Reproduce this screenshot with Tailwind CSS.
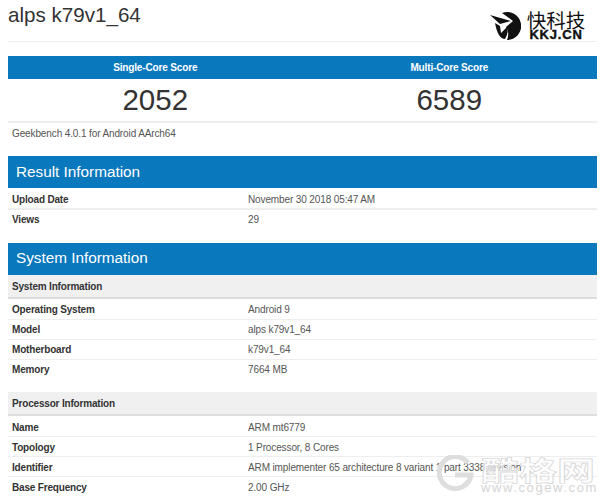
<!DOCTYPE html>
<html lang="en">
<head>
    <meta charset="UTF-8">
    <title>alps k79v1_64 - Geekbench</title>
    <script src="https://cdn.jsdelivr.net/npm/@tailwindcss/browser@4"></script>
</head>
<body class="bg-white font-['Liberation_Sans',Arial,sans-serif] text-[#333]">
    <div class="relative w-[600px] h-[501px] overflow-hidden pl-[8px] pr-[3px]">

        <!-- Header -->
        <div class="flex justify-between h-[42px] border-b border-[#eee]">
            <h1 class="text-[20.6px] leading-[30px] text-[#333]">alps k79v1_64</h1>
            <div class="flex items-start gap-[5px] pr-[11px] pt-[10px]">
                <svg class="w-[32px] h-[29px] mt-[2px]" viewBox="0 0 32 29">
                    <path d="M13 1 A14 14 0 1 1 18 28 Q21 20 17 15 L24 9 Z" fill="#111"/>
                    <path d="M1 3 L22 9 L11 12 Z" fill="#111"/>
                    <path d="M6 11 L11 14 L12 21 L18 15 Q20 20 16 27 Q9 27 6 11 Z" fill="#111"/>
                </svg>
                <div class="flex flex-col items-center w-[60px]">
                    <span class="text-[19.5px] leading-[19px] text-[#111] font-['Noto_Sans_CJK_SC',sans-serif]">快科技</span>
                    <span class="mt-[1px] text-[13px] leading-[10px] font-black tracking-[0.8px] text-[#111] [-webkit-text-stroke:0.4px_#111]">KKJ.CN</span>
                </div>
            </div>
        </div>

        <!-- Scores -->
        <div class="mt-[14px] grid grid-cols-2 h-[23px] bg-[#0a78bd] text-white text-[10px] tracking-[-0.15px] font-bold text-center leading-[23px]">
            <div>Single-Core Score</div>
            <div class="pr-[1px]">Multi-Core Score</div>
        </div>
        <div class="grid grid-cols-2 h-[44px] border-b-2 border-[#eee] text-[29.5px] text-center leading-[42px] text-[#333]">
            <div>2052</div>
            <div class="pr-[1px]">6589</div>
        </div>
        <p class="pl-[4px] text-[10px] tracking-[-0.12px] leading-[21px] text-[#555]">Geekbench 4.0.1 for Android AArch64</p>

        <!-- Result Information -->
        <h2 class="mt-[12px] h-[32px] pl-[8px] bg-[#0a78bd] text-white text-[15.3px] leading-[31px]">Result Information</h2>
        <div class="flex h-[22px] border-b-2 border-[#eee] text-[10px] leading-[23px]">
            <div class="w-[240px] pl-[4px] font-bold tracking-[-0.18px]">Upload Date</div>
            <div class="text-[#555] tracking-[-0.12px]">November 30 2018 05:47 AM</div>
        </div>
        <div class="flex h-[20px] text-[10px] leading-[20px]">
            <div class="w-[240px] pl-[4px] font-bold tracking-[-0.18px]">Views</div>
            <div class="text-[#555] tracking-[-0.12px]">29</div>
        </div>

        <!-- System Information -->
        <h2 class="mt-[13px] h-[32px] pl-[8px] bg-[#0a78bd] text-white text-[15.3px] leading-[30px]">System Information</h2>
        <div class="h-[24px] pl-[4px] bg-[#f0f0f0] border-b-2 border-[#ddd] text-[10px] tracking-[-0.18px] font-bold leading-[23px]">System Information</div>
        <div class="flex h-[21px] border-b border-[#eee] text-[10px] leading-[21px]">
            <div class="w-[240px] pl-[4px] font-bold tracking-[-0.18px]">Operating System</div>
            <div class="text-[#555] tracking-[-0.12px]">Android 9</div>
        </div>
        <div class="flex h-[20px] border-b border-[#eee] text-[10px] leading-[20px]">
            <div class="w-[240px] pl-[4px] font-bold tracking-[-0.18px]">Model</div>
            <div class="text-[#555] tracking-[-0.12px]">alps k79v1_64</div>
        </div>
        <div class="flex h-[20px] border-b border-[#eee] text-[10px] leading-[20px]">
            <div class="w-[240px] pl-[4px] font-bold tracking-[-0.18px]">Motherboard</div>
            <div class="text-[#555] tracking-[-0.12px]">k79v1_64</div>
        </div>
        <div class="flex h-[20px] text-[10px] leading-[20px]">
            <div class="w-[240px] pl-[4px] font-bold tracking-[-0.18px]">Memory</div>
            <div class="text-[#555] tracking-[-0.12px]">7664 MB</div>
        </div>

        <!-- Processor Information -->
        <div class="mt-[12px] h-[24px] pl-[4px] bg-[#f0f0f0] border-b-2 border-[#ddd] text-[10px] tracking-[-0.18px] font-bold leading-[23px]">Processor Information</div>
        <div class="flex h-[21px] border-b border-[#eee] text-[10px] leading-[23px]">
            <div class="w-[240px] pl-[4px] font-bold tracking-[-0.18px]">Name</div>
            <div class="text-[#555] tracking-[-0.12px]">ARM mt6779</div>
        </div>
        <div class="flex h-[20px] border-b border-[#eee] text-[10px] leading-[22px]">
            <div class="w-[240px] pl-[4px] font-bold tracking-[-0.18px]">Topology</div>
            <div class="text-[#555] tracking-[-0.12px]">1 Processor, 8 Cores</div>
        </div>
        <div class="flex h-[20px] border-b border-[#eee] text-[10px] leading-[22px]">
            <div class="w-[240px] pl-[4px] font-bold tracking-[-0.18px]">Identifier</div>
            <div class="text-[#555] tracking-[-0.12px]">ARM implementer 65 architecture 8 variant 1 part 3338 revision</div>
        </div>
        <div class="flex h-[20px] text-[10px] leading-[22px]">
            <div class="w-[240px] pl-[4px] font-bold tracking-[-0.18px]">Base Frequency</div>
            <div class="text-[#555] tracking-[-0.12px]">2.00 GHz</div>
        </div>

        <!-- Watermark -->
        <div class="absolute left-[437px] top-[455px] flex items-start gap-[7px]">
            <svg class="w-[37px] h-[38px]" viewBox="0 0 37 38" fill="none" stroke="#dedede" stroke-width="5">
                <path d="M31 8 A16 16 0 1 0 34 20 L18 20"/>
            </svg>
            <div class="flex flex-col w-[117px] pt-[1px]">
                <span class="block text-[38px] leading-[26px] font-['Noto_Sans_CJK_SC',sans-serif] font-bold text-white/70 [-webkit-text-stroke:1px_#d8d8d8] scale-y-[.72] whitespace-nowrap">酷格网</span>
                <span class="text-[13px] leading-[12px] tracking-[1.6px] text-[#d4d4d4] whitespace-nowrap">www.cogew.com</span>
            </div>
        </div>

    </div>
</body>
</html>
